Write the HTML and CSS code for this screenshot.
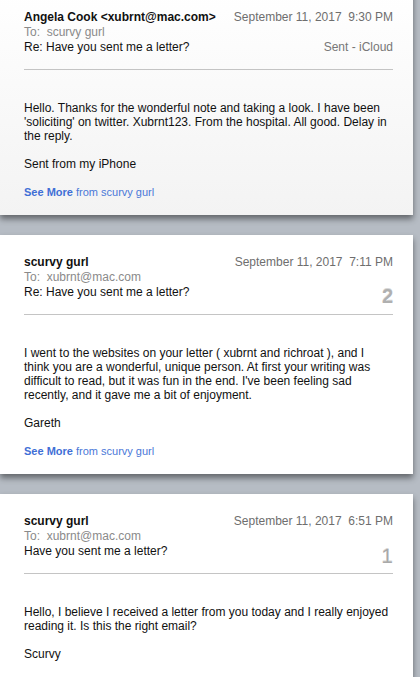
FILE: index.html
```html
<!DOCTYPE html>
<html>
<head>
<meta charset="utf-8">
<link rel="stylesheet" href="styles.css">
</head>
<body>
<div class="thread">
  <div class="card card-first">
    <div class="head">
      <div class="meta">
        <div class="from">Angela Cook &lt;xubrnt@mac.com&gt;</div>
        <div class="to">To:&nbsp; scurvy gurl</div>
        <div class="subject">Re: Have you sent me a letter?</div>
      </div>
      <div class="side">
        <div class="date">September 11, 2017&nbsp; 9:30 PM</div>
        <div class="mailbox">Sent - iCloud</div>
      </div>
    </div>
    <div class="body">
      <p>Hello. Thanks for the wonderful note and taking a look. I have been<br>'soliciting' on twitter. Xubrnt123. From the hospital. All good. Delay in<br>the reply.</p>
      <p>Sent from my iPhone</p>
      <p class="more"><b>See More</b> from scurvy gurl</p>
    </div>
  </div>

  <div class="card">
    <div class="head">
      <div class="meta">
        <div class="from">scurvy gurl</div>
        <div class="to">To:&nbsp; xubrnt@mac.com</div>
        <div class="subject">Re: Have you sent me a letter?</div>
      </div>
      <div class="side">
        <div class="date">September 11, 2017&nbsp; 7:11 PM</div>
        <div class="num">2</div>
      </div>
    </div>
    <div class="body">
      <p>I went to the websites on your letter ( xubrnt and richroat ), and I<br>think you are a wonderful, unique person. At first your writing was<br>difficult to read, but it was fun in the end. I've been feeling sad<br>recently, and it gave me a bit of enjoyment.</p>
      <p>Gareth</p>
      <p class="more"><b>See More</b> from scurvy gurl</p>
    </div>
  </div>

  <div class="card">
    <div class="head">
      <div class="meta">
        <div class="from">scurvy gurl</div>
        <div class="to">To:&nbsp; xubrnt@mac.com</div>
        <div class="subject">Have you sent me a letter?</div>
      </div>
      <div class="side">
        <div class="date">September 11, 2017&nbsp; 6:51 PM</div>
        <div class="num num-one">1</div>
      </div>
    </div>
    <div class="body">
      <p>Hello, I believe I received a letter from you today and I really enjoyed<br>reading it. Is this the right email?</p>
      <p>Scurvy</p>
    </div>
  </div>
</div>
</body>
</html>
```

FILE: styles.css
```css
html, body {
  margin: 0;
  padding: 0;
}
body {
  background: #b6bcc4;
  font-family: "Liberation Sans", Arial, Helvetica, sans-serif;
  color: #111;
  height: 677px;
  overflow: hidden;
}
.thread {
  display: flex;
  flex-direction: column;
  gap: 20px;
  margin-right: 7px;
}
.card {
  background: #fff;
  padding: 20px 20px 16px 24px;
  box-shadow: 0 4px 6px rgba(0, 0, 0, 0.45);
}
.card-first {
  margin-top: -10px;
  background: linear-gradient(#ffffff, #f3f3f3);
}
.head {
  display: flex;
  justify-content: space-between;
  border-bottom: 1px solid #c4c4c4;
  padding-bottom: 14px;
}
.meta {
  display: flex;
  flex-direction: column;
  font-size: 12px;
  line-height: 15px;
}
.from {
  font-weight: bold;
  color: #111;
}
.to {
  color: #8a8a8a;
}
.subject {
  color: #111;
}
.side {
  display: flex;
  flex-direction: column;
  align-items: flex-end;
  justify-content: space-between;
  font-size: 12px;
  line-height: 15px;
  color: #6e6e6e;
}
.mailbox {
  color: #777;
}
.num {
  font-size: 20px;
  line-height: 15px;
  font-weight: bold;
  color: #b0b0b0;
  text-shadow: 0 1px 0 #fff, 0 -1px 0 #d8d8d8;
  transform: translateY(4px);
}
.num-one {
  font-weight: normal;
  color: #a9a9a9;
  font-size: 21px;
}
.body {
  padding-top: 31px;
  font-size: 12px;
  line-height: 14px;
  color: #111;
  white-space: nowrap;
}
.body p {
  margin: 0 0 14px 0;
}
.body p:last-child {
  margin-bottom: 0;
}
.more {
  font-size: 11px;
  color: #4a78d8;
}
.more b {
  color: #3f6fd6;
}
```
